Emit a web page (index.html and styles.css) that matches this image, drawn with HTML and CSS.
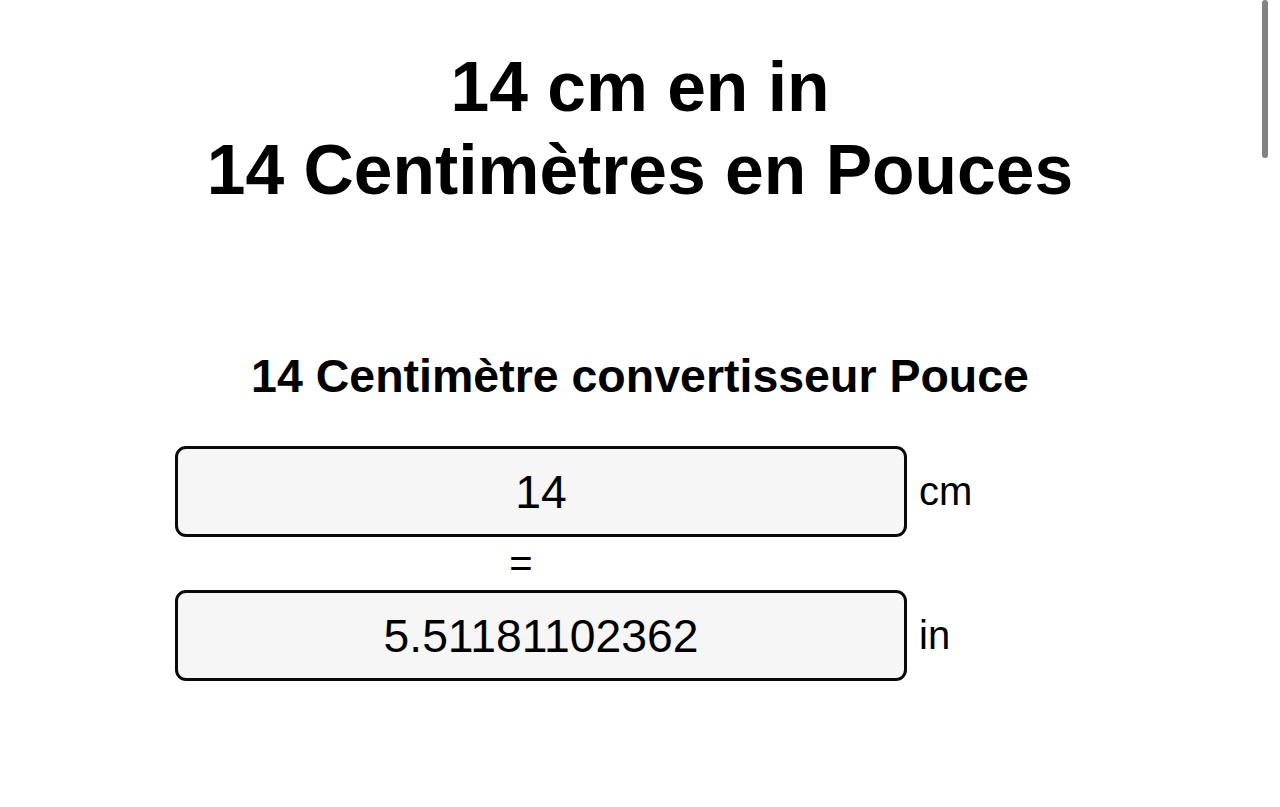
FILE: index.html
```html
<!DOCTYPE html>
<html lang="fr">
<head>
    <meta charset="UTF-8">
    <meta name="viewport" content="width=device-width, initial-scale=1.0">
    <title>14 cm en in</title>
    <link rel="stylesheet" href="styles.css">
</head>
<body>
    <div class="page">
        <h1 class="title">14 cm en in<br>14 Centimètres en Pouces</h1>

        <div class="converter">
            <h2 class="converter-title">14 Centimètre convertisseur Pouce</h2>

            <div class="convert-row">
                <input type="text" class="value-box" id="cmValue" value="14">
                <span class="unit">cm</span>
            </div>
            <div class="equals">=</div>
            <div class="convert-row">
                <input type="text" class="value-box" id="inValue" value="5.51181102362">
                <span class="unit">in</span>
            </div>
        </div>
    </div>

    <div class="scroll-thumb"></div>

    <script>
        const cmInput = document.getElementById('cmValue');
        const inInput = document.getElementById('inValue');

        function round(n) {
            return Math.round(n * 1e11) / 1e11;
        }

        cmInput.addEventListener('input', () => {
            const v = parseFloat(cmInput.value);
            inInput.value = isNaN(v) ? '' : round(v / 2.54);
        });

        inInput.addEventListener('input', () => {
            const v = parseFloat(inInput.value);
            cmInput.value = isNaN(v) ? '' : round(v * 2.54);
        });
    </script>
</body>
</html>
```

FILE: styles.css
```css
* {
    margin: 0;
    padding: 0;
    box-sizing: border-box;
    font-family: "Liberation Sans", Arial, Helvetica, sans-serif;
}

body {
    background-color: #ffffff;
    color: #000;
    min-height: 100vh;
    overflow: hidden;
}

.page {
    width: 1280px;
    padding-top: 46px;
}

.title {
    font-size: 69.6px;
    line-height: 83px;
    font-weight: 700;
    text-align: center;
}

.converter {
    margin-top: 138px;
}

.converter-title {
    font-size: 46.5px;
    line-height: 53px;
    font-weight: 700;
    text-align: center;
    margin-bottom: 43px;
}

.convert-row {
    display: flex;
    align-items: center;
    gap: 12px;
    padding-left: 175px;
}

.value-box {
    width: 732px;
    height: 91px;
    border: 3px solid #0a0a0a;
    border-radius: 11px;
    background-color: #f6f6f6;
    font-size: 46.3px;
    text-align: center;
    color: #000;
    outline: none;
}

.unit {
    font-size: 40px;
    color: #000;
}

.equals {
    width: 732px;
    margin-left: 175px;
    padding-right: 40px;
    text-align: center;
    font-size: 40px;
    line-height: 53px;
    height: 53px;
    color: #000;
}

.scroll-thumb {
    position: fixed;
    top: 0;
    right: 12px;
    width: 6px;
    height: 158px;
    border-radius: 3px;
    background-color: #828282;
}
```
